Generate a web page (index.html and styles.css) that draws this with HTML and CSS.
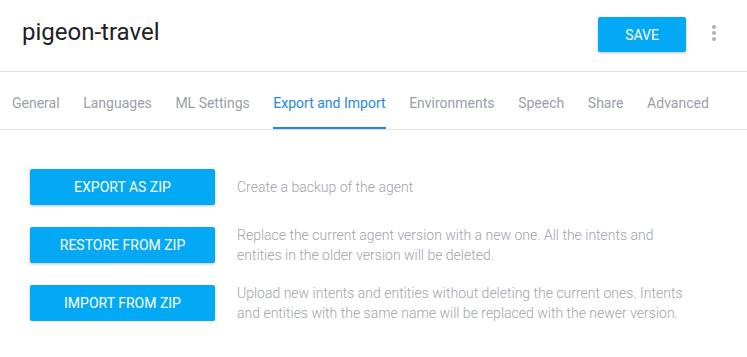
FILE: index.html
```html
<!DOCTYPE html>
<html lang="en">
<head>
    <link rel="stylesheet" href="styles.css">
</head>
<body>
    <header class="topbar">
        <h1 class="agent-name">pigeon-travel</h1>
        <div class="actions">
            <button class="btn save-btn">SAVE</button>
            <span class="kebab"><i></i><i></i><i></i></span>
        </div>
    </header>

    <nav class="tabs">
        <a href="#" class="tab">General</a>
        <a href="#" class="tab">Languages</a>
        <a href="#" class="tab">ML Settings</a>
        <a href="#" class="tab active">Export and Import</a>
        <a href="#" class="tab">Environments</a>
        <a href="#" class="tab">Speech</a>
        <a href="#" class="tab">Share</a>
        <a href="#" class="tab">Advanced</a>
    </nav>

    <section class="export-list">
        <div class="row">
            <button class="btn zip-btn">EXPORT AS ZIP</button>
            <p class="desc">Create a backup of the agent</p>
        </div>
        <div class="row">
            <button class="btn zip-btn">RESTORE FROM ZIP</button>
            <p class="desc">Replace the current agent version with a new one. All the intents and entities in the older version will be deleted.</p>
        </div>
        <div class="row">
            <button class="btn zip-btn">IMPORT FROM ZIP</button>
            <p class="desc">Upload new intents and entities without deleting the current ones. Intents and entities with the same name will be replaced with the newer version.</p>
        </div>
    </section>
</body>
</html>
```

FILE: styles.css
```css
body {
    margin: 0;
    font-family: Roboto, "Liberation Sans", sans-serif;
    background-color: #fff;
    color: #202124;
}
.topbar {
    height: 72px;
    display: flex;
    align-items: center;
    justify-content: space-between;
    padding: 0 31px 0 22px;
    border-bottom: 1px solid #e3e3e3;
    box-sizing: border-box;
}
.agent-name {
    margin: 0 0 8px 0;
    font-size: 24px;
    font-weight: 400;
    color: #202124;
}
.actions {
    display: flex;
    align-items: center;
    gap: 26px;
}
.btn {
    border: none;
    border-radius: 2px;
    background-color: #03a9f4;
    color: #fff;
    font-family: Roboto, "Liberation Sans", sans-serif;
    font-size: 14px;
    box-shadow: 0 1px 3px rgba(0, 0, 0, 0.25);
    cursor: pointer;
}
.save-btn {
    width: 88px;
    height: 35px;
    margin-bottom: 2px;
}
.kebab {
    display: flex;
    flex-direction: column;
    gap: 2px;
    margin-bottom: 6px;
}
.kebab i {
    width: 4px;
    height: 4px;
    border-radius: 50%;
    background-color: #aeb2b8;
}
/* tab strip */
.tabs {
    display: flex;
    height: 58px;
    border-bottom: 1px solid #e3e3e3;
    box-sizing: border-box;
}
.tab {
    margin: 0 11.8px;
    padding-top: 23px;
    font-size: 14px;
    color: #9aa0a9;
    text-decoration: none;
    box-sizing: border-box;
}
.tab:first-child {
    margin-left: 12px;
}
.tab.active {
    color: #1e88e5;
    border-bottom: 2px solid #1e88e5;
}
/* export rows */
.export-list {
    padding: 39px 0 0 30px;
    display: flex;
    flex-direction: column;
    gap: 22px;
}
.row {
    display: flex;
    align-items: center;
    gap: 22px;
    height: 36px;
}
.zip-btn {
    width: 185px;
    height: 36px;
    flex-shrink: 0;
}
.desc {
    margin: 0;
    width: 455px;
    font-size: 14px;
    line-height: 20px;
    font-weight: 300;
    color: #9fa3ab;
}
```
